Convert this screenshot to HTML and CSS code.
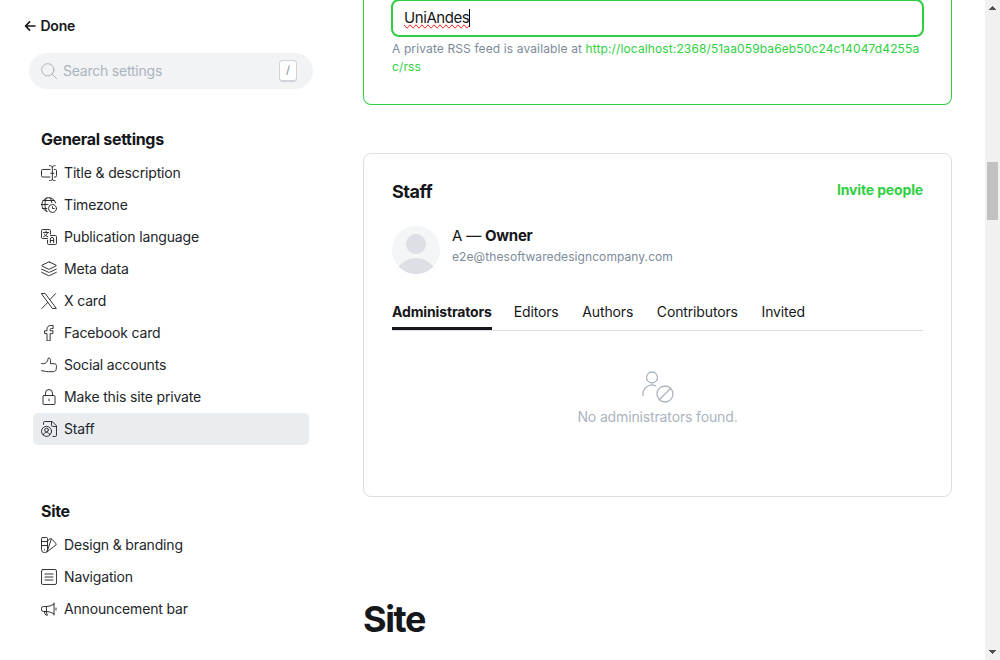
FILE: index.html
```html
<!DOCTYPE html>
<html lang="en">
<head>
<meta charset="utf-8">
<title>Settings</title>
<link rel="stylesheet" href="styles.css">
</head>
<body>
<div class="app">
  <aside class="sidebar">
    <a class="done"><svg class="done-icon" viewBox="0 0 12 12"><path d="M11 6H1.500M5.600 1.900 1.500 6l4.100 4.100"/></svg><span>Done</span></a>
    <div class="search">
      <svg class="search-icon" viewBox="0 0 24 24"><circle cx="10.200" cy="10.200" r="9.200"/><path d="m16.800 16.800 6.600 6.600"/></svg>
      <span class="search-text">Search settings</span>
      <kbd class="key">/</kbd>
    </div>
    <nav class="group">
      <h2 class="group-title">General settings</h2>
      <a class="item"><svg class="icon" viewBox="0 0 24 24"><path d="M13.500 18H2.600A1.900 1.900 0 0 1 .75 16.100V8.600A1.900 1.900 0 0 1 2.600 6.700h10.900M20 6.700h1.400a1.900 1.900 0 0 1 1.850 1.900v7.500a1.900 1.900 0 0 1-1.850 1.900H20M17 4v17M12.800 1c2.500 0 4.200 1 4.200 3 0-2 1.700-3 4.200-3M12.800 23.500c2.500 0 4.200-.8 4.200-2.500 0 1.700 1.700 2.500 4.200 2.500M14.500 12.400h5"/></svg>Title &amp; description</a>
      <a class="item"><svg class="icon" viewBox="0 0 24 24"><circle cx="17.250" cy="17.250" r="6"/><path d="M19.900 17.250h-2.650V14.600M8.700 21.900C7.100 19.900 6 16 6 11.250S7.100 2.800 8.700.95M.8 11.250h9.700M2.900 5.250h17.200M2.300 17.250h6.500M13.300.95a14.400 14.400 0 0 1 3 7.400M22 9A10.500 10.500 0 1 0 9 21.700"/></svg>Timezone</a>
      <a class="item"><svg class="icon" viewBox="0 0 24 24"><path d="M9.700 14.200H2.300a1.500 1.500 0 0 1-1.500-1.500V2.300A1.500 1.500 0 0 1 2.300.8h10.400a1.500 1.500 0 0 1 1.500 1.500v5.200M14.200 9.800h7.500a1.500 1.500 0 0 1 1.500 1.500v10.400a1.500 1.500 0 0 1-1.500 1.500H11.300a1.500 1.500 0 0 1-1.500-1.500v-5M3.700 5.200h7.600M7.500 3.200v2M10 5.200c-.7 3-3 5.200-6 6.300M5 7.500c1 2 3 3.500 5 4M14 20.300v-5.200a2.500 2.500 0 0 1 5 0v5.200M14 17.300h5"/></svg>Publication language</a>
      <a class="item"><svg class="icon" viewBox="0 0 24 24"><path d="M12.700 1.700 22.500 6.200c.6.300.6 1 0 1.300l-9.400 4.600c-.7.300-1.500.3-2.200 0L1.500 7.500c-.6-.3-.6-1 0-1.300l9.800-4.500a1.700 1.700 0 0 1 1.400 0ZM23 12.200l-10.300 4.700a1.700 1.700 0 0 1-1.400 0L1 12.200M23 17l-10.300 4.900a1.700 1.700 0 0 1-1.400 0L1 17"/></svg>Meta data</a>
      <a class="item"><svg class="icon" viewBox="0 0 24 24"><path d="M1 .8h5.300L23 23.200h-5.300ZM10.300 14 1.400 23.200M22 .8l-8.500 9"/></svg>X card</a>
      <a class="item"><svg class="icon" viewBox="0 0 24 24"><path d="M9 23.200V13H5.300V8.700H9V6.300C9 2.700 11 .8 14.500.8h3.700v4.500h-2.700c-1.200 0-1.800.5-1.800 1.700v1.700h4.500l-.8 4.300h-3.700v10.200Z"/></svg>Facebook card</a>
      <a class="item"><svg class="icon" viewBox="0 0 24 24"><path d="M.8 20.500 7 21.600c1 .3 2.500.4 4 .4h7.500c2.700 0 4-1.500 4.300-3.700l.4-4.300c.2-2.500-1-4-3.500-4h-5.500V5c0-2.300-1-3.500-2.200-3.500-1 0-1.600.7-1.600 1.800 0 3.500-3.400 6.700-6.400 6.700H.8"/></svg>Social accounts</a>
      <a class="item"><svg class="icon" viewBox="0 0 24 24"><rect x="3" y="9.800" width="18" height="13.500" rx="1.500"/><path d="M6.800 9.800V6a5.200 5.200 0 0 1 10.400 0v3.800M12 15v2.700"/></svg>Make this site private</a>
      <a class="item active"><svg class="icon" viewBox="0 0 24 24"><path d="M3.800 5V2.300A1.500 1.500 0 0 1 5.300.8h11.500l6.400 6.400v14.500a1.500 1.500 0 0 1-1.500 1.500H18M15.800.8v5.900a1.500 1.500 0 0 0 1.500 1.500h5.900"/><circle cx="8.300" cy="15.500" r="7.500"/><circle cx="8.300" cy="13.500" r="2.800"/><path d="M3.500 20.500c1-2.400 2.700-3.300 4.800-3.300s3.800.9 4.800 3.300"/></svg>Staff</a>
    </nav>
    <nav class="group">
      <h2 class="group-title">Site</h2>
      <a class="item"><svg class="icon" viewBox="0 0 24 24"><path d="M2.300.8h6a1.500 1.500 0 0 1 1.500 1.500V19a4.500 4.500 0 0 1-9 0V2.300A1.500 1.500 0 0 1 2.300.8ZM.8 6.800h9M.8 12.800h9M5.300 19v.5M9.800 6l3.700-3.300a1.500 1.500 0 0 1 2 0l7 7c.6.600.6 1.500 0 2.100L9 22.500M9.800 20 15.500 3"/></svg>Design &amp; branding</a>
      <a class="item"><svg class="icon" viewBox="0 0 24 24"><rect x=".8" y=".8" width="22.400" height="22.400" rx="2"/><path d="M6 7.500h12M6 12h12M6 16.500h12"/></svg>Navigation</a>
      <a class="item"><svg class="icon" viewBox="0 0 24 24"><path d="M7.500 15.800H4.100a3.400 3.400 0 0 1 0-7.500h3.400ZM7.500 15.800c4.300 0 8.500 1.400 12 3.800V4.400c-3.500 2.400-7.700 3.900-12 3.900M19.500 4.400V3M19.500 19.600v1.500M22.500 10.500v3M5 15.800a10 10 0 0 0 2.300 5.400h2.500c-1-1.500-1.700-3.400-1.800-5.400"/></svg>Announcement bar</a>
    </nav>
  </aside>
  <main class="content">
    <section class="card card-editing">
      <div class="input"><span class="typed">UniAndes</span><span class="caret"></span></div>
      <p class="hint">A private RSS feed is available at <a class="link">http://localhost:2368/51aa059ba6eb50c24c14047d4255ac/rss</a></p>
    </section>
    <section class="card card-staff">
      <header class="card-head"><h3 class="card-title">Staff</h3><a class="invite">Invite people</a></header>
      <div class="owner">
        <svg class="avatar" viewBox="0 0 48 48"><defs><clipPath id="disc"><circle cx="24" cy="24" r="24"/></clipPath></defs><g clip-path="url(#disc)"><path class="avatar-bg" d="M0 0h48v48H0z"/><circle cx="24" cy="18" r="10"/><circle cx="24" cy="54" r="22"/></g></svg>
        <div class="owner-text"><div class="owner-name">A — <b>Owner</b></div><div class="owner-mail">e2e@thesoftwaredesigncompany.com</div></div>
      </div>
      <div class="tabs"><span class="tab tab-on">Administrators</span><span class="tab">Editors</span><span class="tab">Authors</span><span class="tab">Contributors</span><span class="tab">Invited</span></div>
      <div class="empty">
        <svg class="empty-icon" viewBox="0 0 32 32"><circle cx="10" cy="6.500" r="5.500"/><path d="M1 24.500v-1.500a9 9 0 0 1 12.700-8.200M17.200 28.800 28.800 17.200"/><circle cx="23" cy="23" r="8"/></svg>
        <span>No administrators found.</span>
      </div>
    </section>
    <h1 class="section-title">Site</h1>
  </main>
  <div class="scrollbar">
    <svg class="arrow" viewBox="0 0 7 4" shape-rendering="crispEdges"><path d="M3 0h1v1h1v1h1v1h1v1H0V3h1V2h1V1h1z"/></svg>
    <div class="track"><div class="thumb"></div></div>
    <svg class="arrow" viewBox="0 0 7 4" shape-rendering="crispEdges"><path d="M0 0h7v1H6v1H5v1H4v1H3V3H2V2H1V1H0z"/></svg>
  </div>
</div>
</body>
</html>
```
FILE: styles.css
```css
* { box-sizing: border-box; }
body { margin: 0; background: #fff; color: #15171a; font: 14px/20px Inter, sans-serif; letter-spacing: -.14px; }
h1, h2, h3, p { margin: 0; }
svg { flex: none; display: block; fill: none; stroke: currentColor; stroke-linecap: round; stroke-linejoin: round; }
.app { display: flex; height: 660px; overflow: hidden; }
.sidebar { width: 363px; flex: none; padding: 16px 0 0 29px; }
.done { display: flex; align-items: center; gap: 4.5px; height: 20px; margin-left: -5px; font-weight: 600; letter-spacing: -.25px; }
.done-icon { width: 12px; height: 12px; stroke-width: 1.6; }
.search { display: flex; align-items: center; width: 284px; height: 36px; margin-top: 17px; padding: 0 16px 0 12px; border-radius: 18px; background: #f1f3f5; color: #abb4be; }
.search-icon { width: 16px; height: 16px; stroke-width: 1.5; }
.search-text { flex: 1; margin-left: 6px; letter-spacing: -.22px; }
.key { width: 18px; height: 22px; border: 1px solid #ced4d9; border-bottom-width: 2px; border-radius: 4px; background: #fff; color: #7c8b9a; font: 11px/19px Inter, sans-serif; text-align: center; }
.group { width: 280px; margin-top: 40px; padding-left: 4px; }
.group + .group { margin-top: 56px; }
.group-title { height: 20px; margin: 0 0 8px 8px; font-size: 16px; line-height: 20px; font-weight: 700; letter-spacing: -.31px; }
.item { display: flex; align-items: center; gap: 7px; height: 32px; padding-left: 8px; border-radius: 5px; color: #222529; letter-spacing: -.16px; }
.active { background: #e9edf0; }
.icon { width: 16px; height: 16px; stroke-width: 1.4; }
.content { width: 589px; flex: none; }
.card { border: 1px solid #dddfe3; border-radius: 8px; padding: 0 28px; }
.card-editing { display: flow-root; height: 105px; border-color: #30cf43; border-top: 0; border-radius: 0 0 8px 8px; }
.input { display: flex; align-items: center; height: 38px; margin: -1px -1px 0; padding-left: 11px; border: 2px solid #30cf43; border-radius: 8px; font-size: 15px; letter-spacing: -.42px; }
.typed { text-decoration: spelling-error; }
.caret { width: 1px; height: 18px; background: #000; }
.hint { margin-top: 3px; color: #7c8b9a; font-size: 12px; line-height: 18px; letter-spacing: .12px; }
.link { color: #30cf43; word-break: break-all; }
.card-staff { height: 344px; margin-top: 48px; }
.card-head { display: flex; justify-content: space-between; margin-top: 26px; }
.card-title { font-size: 18px; line-height: 24px; font-weight: 700; letter-spacing: -.45px; }
.invite { color: #30cf43; font-weight: 700; line-height: 20px; letter-spacing: -.15px; }
.owner { display: flex; align-items: center; gap: 12px; margin-top: 22px; height: 48px; }
.avatar { width: 48px; height: 48px; stroke: none; fill: #dddfe5; }
.avatar-bg { fill: #f4f5f7; }
.owner-text { padding-bottom: 9px; }
.owner-name { font-size: 15px; line-height: 22px; letter-spacing: -.22px; }
.owner-mail { color: #7c8b9a; font-size: 12px; line-height: 19px; letter-spacing: .08px; }
.tabs { display: flex; gap: 23.7px; margin-top: 28px; height: 29px; border-bottom: 1px solid #dddfe3; }
.tab { height: 28px; }
.tab-on { width: 100px; margin-right: -2px; font-weight: 700; border-bottom: 3px solid #15171a; white-space: nowrap; }
.empty { display: flex; flex-direction: column; align-items: center; gap: 4px; margin-top: 40px; color: #abb4be; }
.empty-icon { width: 32px; height: 32px; stroke-width: 1.3; }
.section-title { margin-top: 98px; font-size: 36px; line-height: 48px; font-weight: 700; letter-spacing: -1.4px; }
.scrollbar { display: flex; flex-direction: column; align-items: center; justify-content: space-between; width: 15px; margin-left: auto; padding: 6px 0; background: #f1f1f1; }
.arrow { width: 7px; height: 4px; fill: #505050; stroke: none; }
.track { flex: 1; padding-top: 152px; }
.thumb { width: 11px; height: 58px; background: #c1c1c1; }
```
